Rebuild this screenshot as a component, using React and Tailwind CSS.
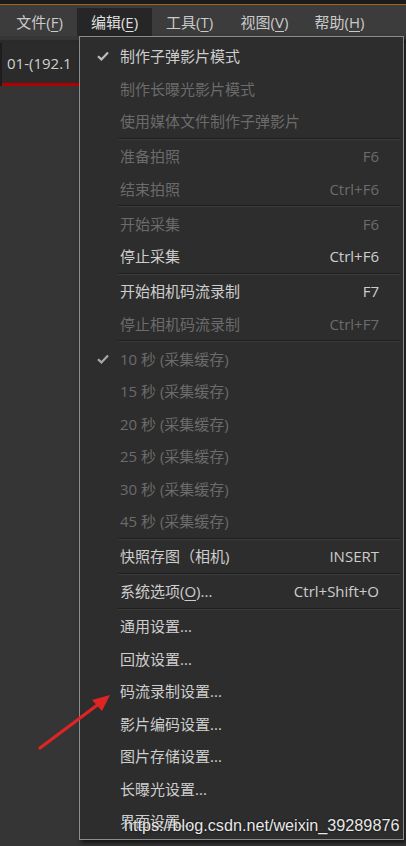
import React from 'react';

const menus = [
  { label: '文件', key: 'F' },
  { label: '编辑', key: 'E', active: true },
  { label: '工具', key: 'T' },
  { label: '视图', key: 'V' },
  { label: '帮助', key: 'H' },
];

// 菜单项: sep 为分隔线
const items = [
  { text: '制作子弹影片模式', checked: true },
  { text: '制作长曝光影片模式', disabled: true },
  { text: '使用媒体文件制作子弹影片', disabled: true },
  { sep: true },
  { text: '准备拍照', shortcut: 'F6', disabled: true },
  { text: '结束拍照', shortcut: 'Ctrl+F6', disabled: true },
  { sep: true },
  { text: '开始采集', shortcut: 'F6', disabled: true },
  { text: '停止采集', shortcut: 'Ctrl+F6' },
  { sep: true },
  { text: '开始相机码流录制', shortcut: 'F7' },
  { text: '停止相机码流录制', shortcut: 'Ctrl+F7', disabled: true },
  { sep: true },
  { text: '10 秒 (采集缓存)', checked: true, disabled: true },
  { text: '15 秒 (采集缓存)', disabled: true },
  { text: '20 秒 (采集缓存)', disabled: true },
  { text: '25 秒 (采集缓存)', disabled: true },
  { text: '30 秒 (采集缓存)', disabled: true },
  { text: '45 秒 (采集缓存)', disabled: true },
  { sep: true },
  { text: '快照存图（相机)', shortcut: 'INSERT' },
  { sep: true },
  { text: '系统选项(', mnemonic: 'O', after: ')...', shortcut: 'Ctrl+Shift+O' },
  { sep: true },
  { text: '通用设置...' },
  { text: '回放设置...' },
  { text: '码流录制设置...' },
  { text: '影片编码设置...' },
  { text: '图片存储设置...' },
  { text: '长曝光设置...' },
  { text: '界面设置...' },
];

const CheckMark = ({ color }) => (
  <svg width="12" height="10" viewBox="0 0 12 10">
    <path d="M1 5.2 L4.4 8.4 L11 1.4" fill="none" stroke={color} strokeWidth="2.2" />
  </svg>
);

const MenuItem = ({ item }) => {
  if (item.sep) {
    return (
      <div className="h-[2.5px] flex flex-col justify-center pl-[38px] pr-[3px]">
        <div className="h-[1px] bg-[#1e1e1e]" />
        <div className="h-[1px] bg-[#3b3b3b]" />
      </div>
    );
  }
  const color = item.disabled ? 'text-[#6b6b6b]' : 'text-[#cdcdcd]';
  return (
    <div className={`h-[32.5px] flex items-center ${color}`}>
      <div className="w-[40px] flex justify-center pl-[6px]">
        {item.checked && <CheckMark color={item.disabled ? '#a8a8a8' : '#bdbdbd'} />}
      </div>
      <div className="flex-1 whitespace-nowrap">
        {item.text}
        {item.mnemonic && <span className="underline underline-offset-[3px]">{item.mnemonic}</span>}
        {item.after}
      </div>
      <div className="pr-[24px] whitespace-nowrap">{item.shortcut}</div>
    </div>
  );
};

const App = () => {
  return (
    <div
      className="relative w-[406px] h-[846px] overflow-hidden bg-[#353535] text-[15px]"
      style={{ fontFamily: '"Open Sans", "Noto Sans CJK SC", sans-serif' }}
    >
      {/* 顶部边条 */}
      <div className="h-[4px] bg-[#1b1b1b]" />
      <div className="h-[1px] bg-[#a8621c]" />

      {/* 菜单栏 */}
      <div className="h-[31px] bg-[#3c3c3c] flex items-end pl-[2px]">
        {menus.map((m) => (
          <div
            key={m.key}
            className={`h-[28px] w-[75px] flex items-center justify-center text-[#cacaca] ${m.active ? 'bg-[#262626] text-[#e0e0e0]' : ''}`}
          >
            {m.label}(<span className="underline underline-offset-[3px]">{m.key}</span>)
          </div>
        ))}
      </div>

      {/* 标签栏 */}
      <div className="h-[4px] bg-[#363636]" />
      <div className="h-[3px] bg-[#2a2a2a]" />
      <div className="flex">
        <div className="w-[80px] border-l-[2px] border-[#1d1d1d]">
          <div className="h-[40px] bg-[#2b2b2b] flex items-center pl-[5px] text-[#d0d0d0] whitespace-nowrap">
            01-(192.1
          </div>
          <div className="h-[3px] bg-[#b10000]" />
        </div>
      </div>

      {/* 编辑 下拉菜单 */}
      <div className="absolute left-[79px] top-[36px] w-[325px] h-[804px] bg-[#2d2d2d] border border-[#8c8c8c] pt-[3px] shadow-[2px_3px_4px_rgba(0,0,0,0.6)]">
        {items.map((item, i) => (
          <MenuItem key={i} item={item} />
        ))}
      </div>

      {/* 红色箭头 */}
      <svg className="absolute left-0 top-0" width="406" height="846">
        <line x1="40" y1="748" x2="100" y2="703" stroke="#e02424" strokeWidth="3.2" strokeLinecap="round" />
        <path d="M110 695 L92 700 L102 711 Z" fill="#e02424" />
      </svg>

      {/* 水印 */}
      <div
        className="absolute left-[124px] top-[813px] text-[16.2px] text-[#e8e8e8] whitespace-nowrap [text-shadow:0_0_2px_rgba(0,0,0,0.9)]"
        style={{ fontFamily: '"Liberation Sans", Arial, sans-serif' }}
      >
        https://blog.csdn.net/weixin_39289876
      </div>
    </div>
  );
};

export default App;
